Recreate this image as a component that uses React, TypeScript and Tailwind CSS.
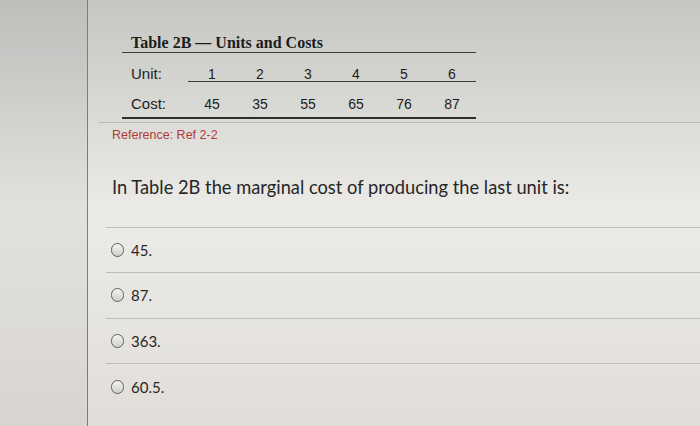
const units = [1, 2, 3, 4, 5, 6]
const costs = [45, 35, 55, 65, 76, 87]
const options = ['45.', '87.', '363.', '60.5.']

function Radio() {
  return (
    <span className="block h-[14px] w-[13px] rounded-full border-[1.5px] border-[#5f5f5d] bg-gradient-to-b from-[#f4f4f2] to-[#cfcfcc]" />
  )
}

export default function App() {
  return (
    <div className="flex h-[426px] w-[700px] overflow-hidden bg-gradient-to-b from-[#c5c7c3] via-[#ecebe7] to-[#e1ded9]">
      <aside className="w-[88px] shrink-0 border-r border-[#7c7e7b] bg-black/[0.04]" />

      <main className="flex-1 pt-[34px]">
        {/* table 2B */}
        <div className="ml-[34px] w-[354px] text-[#1c1c1c]">
          <div className="border-b border-[#3a3a3a] pl-[9px] font-['Liberation_Serif',serif] text-[16px] font-bold leading-[18px]">
            Table 2B — Units and Costs
          </div>
          <div className="flex h-[29px] items-end font-['Liberation_Sans',sans-serif] text-[14px] leading-none">
            <span className="w-[66px] pb-[1px] pl-[9px] text-[15px]">Unit:</span>
            <div className="flex flex-1 border-b border-[#3a3a3a]">
              {units.map((u) => (
                <span key={u} className="w-[48px] text-center">
                  {u}
                </span>
              ))}
            </div>
          </div>
          <div className="flex h-[37px] items-end border-b-2 border-[#2e2e2e] pb-[6px] font-['Liberation_Sans',sans-serif] text-[14px] leading-none">
            <span className="w-[66px] pl-[9px] text-[15px]">Cost:</span>
            {costs.map((c) => (
              <span key={c} className="w-[48px] text-center">
                {c}
              </span>
            ))}
          </div>
        </div>

        <div className="ml-[11px] mt-[3px] border-t border-[#b9b9b6]" />

        <p className="ml-[24px] mt-[6px] font-['Liberation_Sans',sans-serif] text-[12.5px] leading-none text-[#b23b36]">
          Reference: Ref 2-2
        </p>

        <p className="ml-[24px] mt-[34px] font-['Lato',sans-serif] text-[18.3px] leading-[22px] text-[#262626]">
          In Table 2B the marginal cost of producing the last unit is:
        </p>

        <div className="ml-[18px] mt-[29px] border-t border-[#bdbdba]">
          {options.map((o, i) => (
            <label
              key={o}
              className={`flex h-[45.5px] items-center gap-[7px] pl-[5px] font-['Lato',sans-serif] text-[15px] text-[#262626] ${
                i < options.length - 1 ? 'border-b border-[#bdbdba]' : ''
              }`}
            >
              <Radio />
              <span>{o}</span>
            </label>
          ))}
        </div>
      </main>
    </div>
  )
}
